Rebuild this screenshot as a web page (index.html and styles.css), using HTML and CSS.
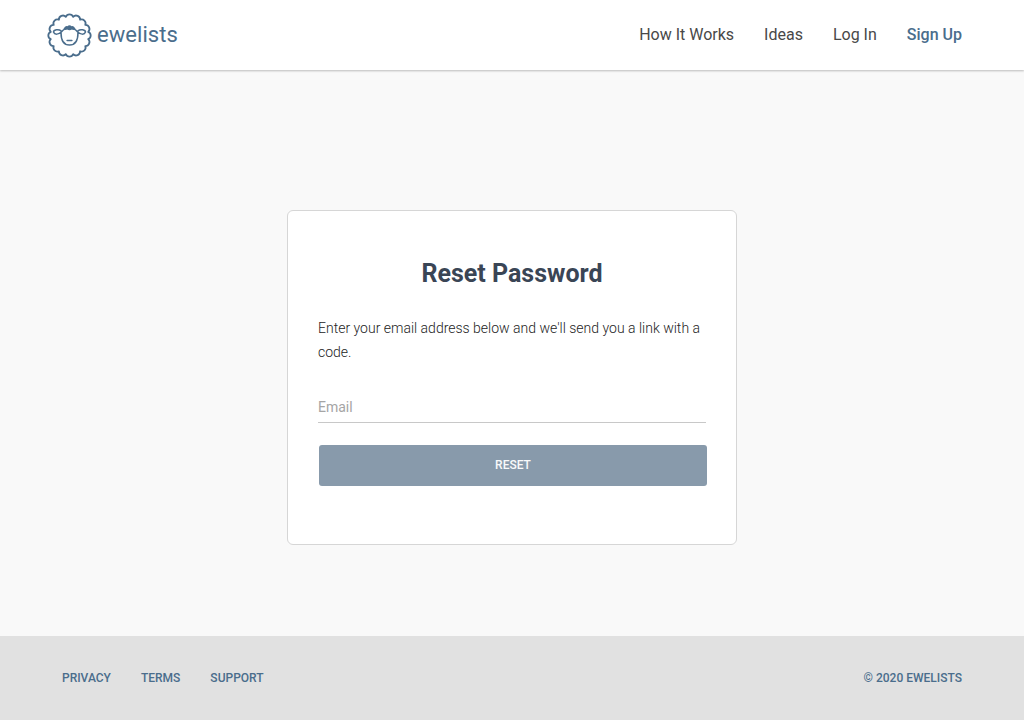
FILE: index.html
```html
<!DOCTYPE html>
<html lang="en">
<head>
<meta charset="utf-8">
<title>Ewelists - Reset Password</title>
<link rel="stylesheet" href="styles.css">
</head>
<body>
<header class="header">
  <a class="brand">
    <svg class="logo" viewBox="-23.5 -23.5 47 47" fill="none" stroke="#4a6d8c" stroke-width="1.8" stroke-linejoin="round" stroke-linecap="round">
      <path d="M-3.7-18.7A4 4 0 0 1 3.7-18.7A4 4 0 0 1 10.6-15.8A4 4 0 0 1 15.8-10.6A4 4 0 0 1 18.7-3.7A4 4 0 0 1 18.7 3.7A4 4 0 0 1 15.8 10.6A4 4 0 0 1 10.6 15.8A4 4 0 0 1 3.7 18.7A4 4 0 0 1-3.7 18.7A4 4 0 0 1-10.6 15.8A4 4 0 0 1-15.8 10.6A4 4 0 0 1-18.7 3.7A4 4 0 0 1-18.7-3.7A4 4 0 0 1-15.8-10.6A4 4 0 0 1-10.6-15.8A4 4 0 0 1-3.7-18.7Z"/>
      <path stroke-width="1.5" d="M-8.5-3C-8.5 3-6.5 9.5 0 9.5S8.5 3 8.5-3M-8.5-4.6C-11-7-16-5.5-16-3.4C-15-.4-10.5-1-8.2-3.4Q-5-7.8 0-7.8T8.2-3.4C10.5-1 15-.4 16-3.4C16-5.5 11-7 8.5-4.6M-2.4 5.1H2.4"/>
      <path fill="#4a6d8c" stroke="none" d="M-6-6.8Q-4-10.3-2.2-9.2Q0-11.2 2.2-9.2Q4-10.3 6-6.8Q4-5 2.5-5.9Q0-4.4-2.5-5.9Q-4-5-6-6.8Z"/>
    </svg>
    <span class="brand-name">ewelists</span>
  </a>
  <nav class="nav"><a>How It Works</a><a>Ideas</a><a>Log In</a><a class="signup">Sign Up</a></nav>
</header>
<main class="main">
  <form class="card">
    <h1 class="title">Reset Password</h1>
    <p class="intro">Enter your email address below and we'll send you a link with a code.</p>
    <input class="email" type="email" placeholder="Email">
    <button class="reset" type="button">RESET</button>
  </form>
</main>
<footer class="footer">
  <nav class="footer-links"><a>PRIVACY</a><a>TERMS</a><a>SUPPORT</a></nav>
  <span>© 2020 EWELISTS</span>
</footer>
</body>
</html>
```

FILE: styles.css
```css
* { box-sizing: border-box; }
body {
  margin: 0;
  height: 720px;
  display: flex;
  flex-direction: column;
  background: #f9f9f9;
  font-family: Roboto, "Liberation Sans", sans-serif;
}
.header {
  height: 70px;
  padding: 0 62px 0 46px;
  display: flex;
  justify-content: space-between;
  align-items: center;
  background: #fff;
  box-shadow: 0 1px 2px rgba(0, 0, 0, .25);
}
.brand { display: flex; align-items: center; gap: 4px; color: #4a6d8c; }
.logo { width: 47px; height: 47px; }
.brand-name { font-size: 22px; line-height: 28px; letter-spacing: .05px; }
.nav { display: flex; gap: 30px; font-size: 16px; line-height: 24px; color: #484848; }
.signup { color: #4a6d8c; font-weight: 500; }
.main { flex: 1; padding-top: 140px; }
.card {
  width: 450px;
  height: 335px;
  margin: 0 auto;
  padding: 45px 30px 0;
  display: flex;
  flex-direction: column;
  background: #fff;
  border: 1px solid #d6d6d6;
  border-radius: 6px;
}
.title {
  margin: 0 0 24px;
  font-size: 25px;
  line-height: 36px;
  font-weight: 700;
  text-align: center;
  color: #3a4555;
}
.intro { margin: 0; font-size: 14px; line-height: 24px; font-weight: 300; color: #232323; }
.email {
  width: 388px;
  height: 40px;
  margin-top: 19px;
  padding: 9px 0 0;
  border: 0;
  border-bottom: 1px solid #c8c8c8;
  background: transparent;
  font: 14px/20px Roboto, sans-serif;
}
.email::placeholder { color: #a5a5a5; opacity: 1; }
.reset {
  width: 388px;
  height: 41px;
  margin: 22px 0 0 1px;
  padding: 0 0 2px;
  border: 0;
  border-radius: 3px;
  background: #889aab;
  color: #f8f9fa;
  font: 500 12px/18px Roboto, sans-serif;
}
.footer {
  height: 84px;
  padding: 0 62px;
  display: flex;
  justify-content: space-between;
  align-items: center;
  background: #e1e1e1;
  color: #4a6d8c;
  font-size: 12px;
  line-height: 18px;
  font-weight: 500;
}
.footer-links { display: flex; gap: 30px; }
```
